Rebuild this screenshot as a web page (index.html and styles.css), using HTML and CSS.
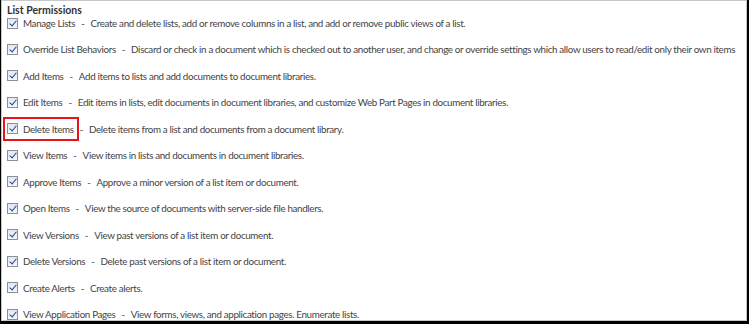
FILE: index.html
```html
<!DOCTYPE html>
<html lang="en">
<head>
    <meta charset="UTF-8">
    <title>List Permissions</title>
    <link rel="stylesheet" href="styles.css">
</head>
<body>
    <div class="frame">
        <h2 class="title">List Permissions</h2>
        <ul class="perms">
            <li class="perm"><span class="label"><span class="box"></span>Manage Lists</span><span class="sep">-</span>Create and delete lists, add or remove columns in a list, and add or remove public views of a list.</li>
            <li class="perm"><span class="label"><span class="box"></span>Override List Behaviors</span><span class="sep">-</span>Discard or check in a document which is checked out to another user, and change or override settings which allow users to read/edit only their own items</li>
            <li class="perm"><span class="label"><span class="box"></span>Add Items</span><span class="sep">-</span>Add items to lists and add documents to document libraries.</li>
            <li class="perm"><span class="label"><span class="box"></span>Edit Items</span><span class="sep">-</span>Edit items in lists, edit documents in document libraries, and customize Web Part Pages in document libraries.</li>
            <li class="perm"><span class="label marked"><span class="box"></span>Delete Items</span><span class="sep">-</span>Delete items from a list and documents from a document library.</li>
            <li class="perm"><span class="label"><span class="box"></span>View Items</span><span class="sep">-</span>View items in lists and documents in document libraries.</li>
            <li class="perm"><span class="label"><span class="box"></span>Approve Items</span><span class="sep">-</span>Approve a minor version of a list item or document.</li>
            <li class="perm"><span class="label"><span class="box"></span>Open Items</span><span class="sep">-</span>View the source of documents with server-side file handlers.</li>
            <li class="perm"><span class="label"><span class="box"></span>View Versions</span><span class="sep">-</span>View past versions of a list item or document.</li>
            <li class="perm"><span class="label"><span class="box"></span>Delete Versions</span><span class="sep">-</span>Delete past versions of a list item or document.</li>
            <li class="perm"><span class="label"><span class="box"></span>Create Alerts</span><span class="sep">-</span>Create alerts.</li>
            <li class="perm"><span class="label"><span class="box"></span>View Application Pages</span><span class="sep">-</span>View forms, views, and application pages. Enumerate lists.</li>
        </ul>
    </div>
</body>
</html>
```

FILE: styles.css
```css
body {
    margin: 0;
    background-color: #000;
    font-family: Lato, "Noto Sans", sans-serif;
}
.frame {
    box-sizing: border-box;
    width: 746px;
    height: 321px;
    margin-left: 1px;
    background-color: #fff;
    border: 1px solid #c8c8c8;
    padding: 2px 0 0 5px;
    overflow: hidden;
}
.title {
    margin: 0;
    font-size: 10.5px;
    font-weight: bold;
    color: #333;
    line-height: 14px;
}
.perms {
    list-style: none;
    margin: 0;
    padding: 0;
}
.perm {
    display: flex;
    align-items: center;
    height: 26.5px;
    font-size: 9.8px;
    letter-spacing: -0.34px;
    color: #444;
    white-space: nowrap;
}
.perm:first-child {
    height: 12px;
    margin-bottom: 7px;
}
.label {
    display: flex;
    align-items: center;
    gap: 5px;
}
.label.marked {
    outline: 2px solid #e8141b;
    padding: 4px 3px 4px 2px;
    margin: -4px -3px -4px -2px;
}
.box {
    box-sizing: border-box;
    width: 11px;
    height: 11px;
    border: 1px solid #8e8f8f;
    background: linear-gradient(#dfe8f4, #f4f7fb);
    position: relative;
}
.box::after {
    content: "";
    position: absolute;
    left: 3px;
    top: 0;
    width: 3px;
    height: 6px;
    border: solid #2b3f8a;
    border-width: 0 1.5px 1.5px 0;
    transform: rotate(40deg);
}
.sep {
    margin: 0 6px;
}
```
